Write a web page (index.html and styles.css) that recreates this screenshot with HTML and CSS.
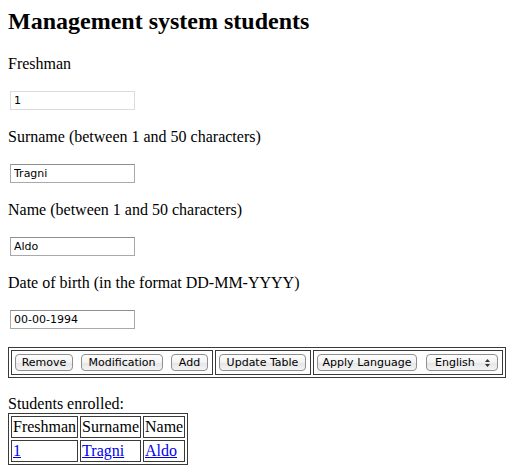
FILE: index.html
```html
<!DOCTYPE html>
<html>
<head>
<meta charset="utf-8">
<title>Management system students</title>
<link rel="stylesheet" href="styles.css">
</head>
<body>
<h1 class="title">Management system students</h1>
<form class="student-form">
<p>Freshman</p>
<p><input class="field field-readonly" type="text" value="1" readonly></p>
<p>Surname (between 1 and 50 characters)</p>
<p><input class="field" type="text" value="Tragni"></p>
<p>Name (between 1 and 50 characters)</p>
<p><input class="field" type="text" value="Aldo"></p>
<p>Date of birth (in the format DD-MM-YYYY)</p>
<p><input class="field" type="text" value="00-00-1994"></p>
<table class="actions">
<tr>
<td><div class="btn-group"><button class="btn btn-remove" type="button">Remove</button><button class="btn btn-mod" type="button">Modification</button><button class="btn btn-add" type="button">Add</button></div></td>
<td><div class="btn-group"><button class="btn btn-update" type="button">Update Table</button></div></td>
<td><div class="btn-group btn-group-lang"><button class="btn btn-apply" type="button">Apply Language</button><span class="select-wrap"><select class="lang"><option>English</option><option>Italiano</option></select><svg class="select-arrows" width="7" height="10" viewBox="0 0 7 10"><path d="M3.5 1 L6 4 L1 4 Z M3.5 9 L6 6 L1 6 Z" fill="#333"/></svg></span></div></td>
</tr>
</table>
</form>
<div class="enrolled-label">Students enrolled:</div>
<table class="students">
<tr><td>Freshman</td><td>Surname</td><td>Name</td></tr>
<tr><td><a href="#">1</a></td><td><a href="#">Tragni</a></td><td><a href="#">Aldo</a></td></tr>
</table>
</body>
</html>
```

FILE: styles.css
```css
html { background: #fff; }
body {
  margin: 8px;
  font-family: "Liberation Serif", "Times New Roman", serif;
  font-size: 16px;
  color: #000;
}
.title {
  font-size: 24px;
  font-weight: bold;
  margin: 0 0 20px 0;
}
.student-form { margin: 0 0 17px 0; }
.student-form p { margin: 16px 0; }
.field {
  box-sizing: border-box;
  width: 125px;
  height: 19px;
  margin: 2px;
  padding: 0 3px;
  border: 1px solid #a9a9a9;
  border-top-color: #8e8e8e;
  font-family: "DejaVu Sans", "Lucida Grande", sans-serif;
  font-size: 11px;
  color: #000;
  background: #fff;
  outline: none;
  vertical-align: baseline;
}
.field-readonly {
  border-color: #dcdcdc;
}
.actions {
  border-collapse: separate;
  border-spacing: 2px;
  border: 1px solid #3a3a3a;
}
.actions td {
  border: 1px solid #3a3a3a;
  padding: 1px;
}
.btn-group {
  display: flex;
  align-items: center;
  gap: 4px;
  padding-right: 1px;
}
.btn-group-lang { gap: 5px; }
.btn {
  box-sizing: border-box;
  height: 17px;
  margin: 2px;
  padding: 0;
  border: 1px solid #8f8f8f;
  border-radius: 4px;
  background: linear-gradient(#ffffff, #f2f2f2 50%, #e4e4e4 51%, #f4f4f4);
  font-family: "DejaVu Sans", "Lucida Grande", sans-serif;
  font-size: 11px;
  color: #000;
  line-height: 15px;
  white-space: nowrap;
  flex: none;
}
.btn-remove { width: 58px; }
.btn-mod { width: 82px; }
.btn-add { width: 37px; }
.btn-update { width: 87px; }
.btn-apply { width: 100px; }
.select-wrap {
  position: relative;
  display: block;
  margin: 2px;
  flex: none;
}
.lang {
  -webkit-appearance: none;
  appearance: none;
  box-sizing: border-box;
  width: 72px;
  height: 17px;
  padding: 0 0 0 8px;
  border: 1px solid #8f8f8f;
  border-radius: 4px;
  background: linear-gradient(#ffffff, #f2f2f2 50%, #e4e4e4 51%, #f4f4f4);
  font-family: "DejaVu Sans", "Lucida Grande", sans-serif;
  font-size: 11px;
  color: #000;
  display: block;
}
.select-arrows {
  position: absolute;
  right: 7px;
  top: 4px;
  pointer-events: none;
}
.enrolled-label { line-height: 18px; }
.students {
  border-collapse: separate;
  border-spacing: 2px;
  border: 1px solid #3a3a3a;
}
.students td {
  border: 1px solid #3a3a3a;
  padding: 1px;
  line-height: 18px;
}
.students a { color: #0000ee; text-decoration: underline; }
```
